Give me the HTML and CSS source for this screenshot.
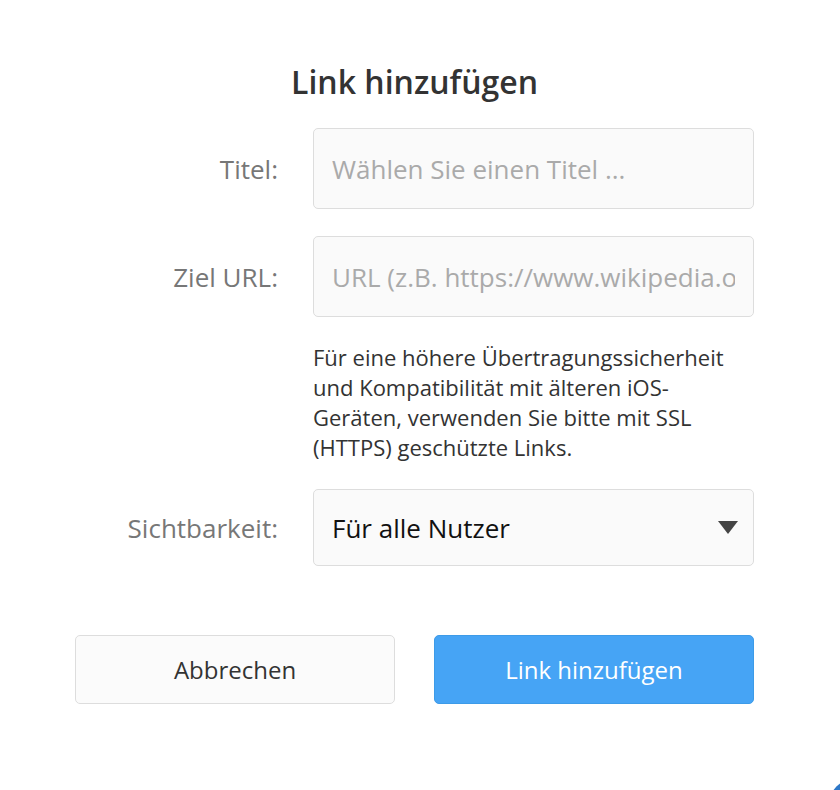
FILE: index.html
```html
<!DOCTYPE html>
<html lang="de">
<head>
    <meta charset="UTF-8">
    <meta name="viewport" content="width=device-width, initial-scale=1.0">
    <title>Link hinzufügen</title>
    <link rel="stylesheet" href="styles.css">
</head>
<body>
    <div class="dialog">
        <h2 class="dialog-title">Link hinzufügen</h2>

        <div class="form-grid">
            <label class="form-label" for="title">Titel:</label>
            <input class="form-input" type="text" id="title" placeholder="Wählen Sie einen Titel ...">

            <label class="form-label" for="url">Ziel URL:</label>
            <input class="form-input" type="text" id="url" placeholder="URL (z.B. https://www.wikipedia.org)">

            <p class="form-hint">Für eine höhere Übertragungssicherheit und Kompatibilität mit älteren iOS-Geräten, verwenden Sie bitte mit SSL (HTTPS) geschützte Links.</p>

            <label class="form-label" for="visibility">Sichtbarkeit:</label>
            <div class="select-box" id="visibility">
                <span>Für alle Nutzer</span>
                <span class="select-arrow"></span>
            </div>
        </div>

        <div class="dialog-actions">
            <button class="btn btn-cancel">Abbrechen</button>
            <button class="btn btn-primary">Link hinzufügen</button>
        </div>
    </div>
    <div class="corner-bubble"></div>
</body>
</html>
```

FILE: styles.css
```css
body {
    margin: 0;
    background: #fff;
    font-family: "Open Sans", "Noto Sans", sans-serif;
    color: #333;
}
.dialog {
    width: 679px;
    margin-left: 75px;
    padding-top: 61px;
}
.dialog-title {
    margin: 0 0 26px;
    text-align: center;
    font-size: 32px;
    line-height: 41px;
    font-weight: 600;
    color: #333;
}
.form-grid {
    display: grid;
    grid-template-columns: 203px 441px;
    column-gap: 35px;
    row-gap: 27px;
    align-items: center;
}
.form-label {
    text-align: right;
    font-size: 26px;
    color: #777;
}
.form-input {
    box-sizing: border-box;
    width: 441px;
    height: 81px;
    padding: 0 18px;
    border: 1.5px solid #ddd;
    border-radius: 5px;
    background: #fafafa;
    font-family: inherit;
    font-size: 26px;
    color: #333;
    outline: none;
}
.form-input::placeholder {
    color: #aaa;
}
.form-hint {
    grid-column: 2;
    margin: -2px 0 0;
    font-size: 22px;
    line-height: 30px;
    color: #333;
}
.select-box {
    box-sizing: border-box;
    height: 77px;
    padding: 0 15px 0 18px;
    border: 1.5px solid #ddd;
    border-radius: 5px;
    background: #fafafa;
    display: flex;
    align-items: center;
    justify-content: space-between;
    font-size: 26px;
    color: #111;
}
.select-arrow {
    width: 0;
    height: 0;
    border-left: 10px solid transparent;
    border-right: 10px solid transparent;
    border-top: 13px solid #444;
}
.dialog-actions {
    display: flex;
    justify-content: space-between;
    margin-top: 69px;
}
.btn {
    width: 320px;
    height: 69px;
    border-radius: 5px;
    font-family: inherit;
    font-size: 24px;
    cursor: pointer;
}
.btn-cancel {
    background: #fbfbfb;
    border: 1.5px solid #ddd;
    color: #333;
}
.btn-primary {
    background: #46a4f5;
    border: 1.5px solid #3d9be8;
    color: #fff;
}
.corner-bubble {
    position: fixed;
    right: -34px;
    bottom: -34px;
    width: 44px;
    height: 44px;
    border-radius: 50%;
    background: #2e78c8;
}
```
